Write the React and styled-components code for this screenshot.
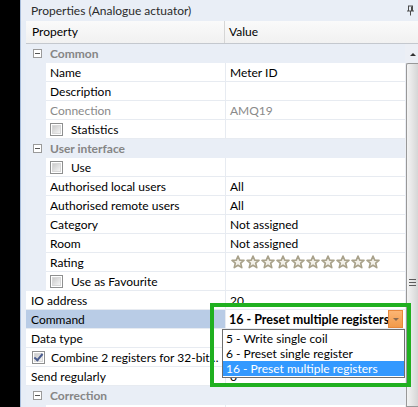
import React from 'react';
import styled, { createGlobalStyle } from 'styled-components';

const GlobalStyle = createGlobalStyle`
  html, body {
    margin: 0;
    padding: 0;
    background: #000;
  }
  body {
    font-family: Lato, "Segoe UI", sans-serif;
    font-size: 12px;
    color: #000;
  }
`;

const rows = [
  { group: 'Common' },
  { label: 'Name', value: 'Meter ID', indent: true },
  { label: 'Description', indent: true },
  { label: 'Connection', value: 'AMQ19', indent: true, muted: true },
  { label: 'Statistics', indent: true, check: 'off' },
  { group: 'User interface' },
  { label: 'Use', indent: true, check: 'off' },
  { label: 'Authorised local users', value: 'All', indent: true },
  { label: 'Authorised remote users', value: 'All', indent: true },
  { label: 'Category', value: 'Not assigned', indent: true },
  { label: 'Room', value: 'Not assigned', indent: true },
  { label: 'Rating', indent: true, stars: 10 },
  { label: 'Use as Favourite', indent: true, check: 'off' },
  { label: 'IO address', value: '20' },
  { label: 'Command', selected: true, combo: '16 - Preset multiple registers' },
  { label: 'Data type' },
  { label: 'Combine 2 registers for 32-bit values', check: 'on' },
  { label: 'Send regularly', value: '0' },
  { group: 'Correction' },
  { label: 'Offset', indent: true },
];

const options = ['5 - Write single coil', '6 - Preset single register', '16 - Preset multiple registers'];

export default function App() {
  return (
    <Screen>
      <GlobalStyle />
      <Gutter />
      <Panel>
        <TitleBar>
          <span>Properties (Analogue actuator)</span>
          <PinIcon />
        </TitleBar>
        <HeaderRow>
          <HeaderName>Property</HeaderName>
          <HeaderValue>Value</HeaderValue>
        </HeaderRow>
        <Body>
          <Grid>
            {rows.map((row, i) =>
              row.group ? (
                <GroupRow key={i}>
                  <Toggle />
                  {row.group}
                </GroupRow>
              ) : (
                <Row key={i}>
                  {row.indent && <Indent />}
                  <NameCell $selected={row.selected} $muted={row.muted} $check={!!row.check} $indent={row.indent}>
                    {row.check && <CheckBox $checked={row.check === 'on'} />}
                    <Label>{row.label}</Label>
                  </NameCell>
                  <ValueCell $muted={row.muted}>
                    {row.value}
                    {row.stars && <Stars count={row.stars} />}
                    {row.combo && (
                      <Combo>
                        <ComboText>{row.combo}</ComboText>
                        <ComboButton />
                      </Combo>
                    )}
                  </ValueCell>
                </Row>
              )
            )}
          </Grid>
          <ScrollBar>
            <ScrollArrow />
            <Thumb>
              <Grip />
            </Thumb>
          </ScrollBar>
        </Body>
      </Panel>
      <DropList>
        {options.map((o, i) => (
          <Option key={o} $active={i === options.length - 1}>
            {o}
          </Option>
        ))}
      </DropList>
      <Highlight />
    </Screen>
  );
}

function PinIcon() {
  return (
    <PinSvg width="9" height="11" viewBox="0 0 9 11">
      <path d="M2 1h5M2.5 1v5M6.5 1v5M1 6h7M4.5 6v4.5" stroke="#4a4a4a" strokeWidth="1" fill="none" />
      <rect x="5" y="1.5" width="1.5" height="4.5" fill="#4a4a4a" />
    </PinSvg>
  );
}

function Stars({ count }) {
  return (
    <StarRow>
      {Array.from({ length: count }).map((_, i) => (
        <svg key={i} width="14" height="14" viewBox="0 0 14 14">
          <path
            d="M7 1 L8.7 5.1 L13 5.4 L9.7 8.2 L10.8 12.6 L7 10.2 L3.2 12.6 L4.3 8.2 L1 5.4 L5.3 5.1 Z"
            fill="#f3f1ea"
            stroke="#a8a18a"
            strokeWidth="1.6"
            strokeLinejoin="round"
          />
        </svg>
      ))}
    </StarRow>
  );
}

const Screen = styled.div`
  position: relative;
  display: flex;
  width: 418px;
  height: 407px;
  overflow: hidden;
  background: #000;
`;

const Gutter = styled.div`
  flex: none;
  width: 20px;
  background: #000;
`;

const Panel = styled.div`
  flex: 1;
  min-width: 0;
  display: flex;
  flex-direction: column;
  background: #e7edf6;
  border-left: 1px solid #a9bedc;
`;

const TitleBar = styled.div`
  height: 21px;
  display: flex;
  align-items: center;
  justify-content: space-between;
  padding: 0 3px 0 10px;
  color: #2b2b2b;
  background: #e9eef6;
`;

const PinSvg = styled.svg`
  display: block;
`;

const HeaderRow = styled.div`
  display: flex;
  height: 22px;
  margin-left: 5px;
  background: linear-gradient(#fafafa, #f1f1f1);
  border-bottom: 1px solid #c4c8ce;
`;

const HeaderName = styled.div`
  width: 199px;
  padding-left: 6px;
  line-height: 22px;
  box-sizing: border-box;
  border-right: 1px solid #d6d6d6;
`;

const HeaderValue = styled.div`
  padding-left: 4px;
  line-height: 22px;
`;

const Body = styled.div`
  flex: 1;
  display: flex;
  margin-left: 5px;
  min-height: 0;
`;

const Grid = styled.div`
  width: 379px;
  flex: none;
  background: #fff;
`;

const GroupRow = styled.div`
  display: flex;
  align-items: center;
  height: 19px;
  background: #e9eef6;
  color: #858585;
  font-weight: 700;
`;

const Toggle = styled.span`
  position: relative;
  width: 9px;
  height: 9px;
  box-sizing: border-box;
  margin: 0 8px 0 7px;
  border: 1px solid #9a9a9a;
  background: #fff;

  &::after {
    content: '';
    position: absolute;
    left: 1px;
    top: 3px;
    width: 5px;
    height: 1px;
    background: #555;
  }
`;

const Row = styled.div`
  display: flex;
  height: 19px;
`;

const Indent = styled.div`
  width: 20px;
  flex: none;
  background: #e9eef6;
`;

const NameCell = styled.div`
  display: flex;
  align-items: center;
  width: ${(p) => (p.$indent ? '179px' : '199px')};
  flex: none;
  box-sizing: border-box;
  padding-left: ${(p) => (p.$indent ? '4px' : p.$check ? '6px' : '5px')};
  border-bottom: 1px solid #e7ebf1;
  background: ${(p) => (p.$selected ? '#b9cce6' : '#fff')};
  color: ${(p) => (p.$muted ? '#8a8a8a' : '#000')};
  min-width: 0;
`;

const Label = styled.span`
  white-space: nowrap;
  overflow: hidden;
  text-overflow: ellipsis;
  padding-right: 4px;
`;

const CheckBox = styled.span`
  position: relative;
  flex: none;
  width: 13px;
  height: 13px;
  box-sizing: border-box;
  margin-right: ${(p) => (p.$checked ? '6px' : '8px')};
  border: 1px solid #8e8f8f;
  background: #fff;

  &::before {
    content: '';
    position: absolute;
    inset: 1px;
    background: linear-gradient(135deg, #cbcbcb, #f4f4f4);
    border: 1px solid #d8d8d8;
    box-sizing: border-box;
  }

  ${(p) =>
    p.$checked &&
    `
    &::after {
      content: '';
      position: absolute;
      left: 3px;
      top: 0px;
      width: 3px;
      height: 7px;
      border: solid #4a5c8e;
      border-width: 0 2px 2px 0;
      transform: rotate(40deg);
    }
  `}
`;

const ValueCell = styled.div`
  position: relative;
  flex: 1;
  min-width: 0;
  display: flex;
  align-items: center;
  padding-left: 4px;
  border-left: 1px solid #e7ebf1;
  border-bottom: 1px solid #e7ebf1;
  color: ${(p) => (p.$muted ? '#8a8a8a' : '#000')};
  white-space: nowrap;
`;

const StarRow = styled.div`
  display: flex;
  gap: 1px;
  margin-left: 1px;
`;

const Combo = styled.div`
  display: flex;
  align-items: center;
  width: 174px;
  height: 18px;
  margin-left: -1px;
`;

const ComboText = styled.span`
  flex: 1;
  min-width: 0;
  overflow: hidden;
  white-space: nowrap;
  font-weight: 700;
  font-size: 12.5px;
`;

const ComboButton = styled.span`
  position: relative;
  flex: none;
  width: 15px;
  height: 18px;
  background: linear-gradient(#fbb574, #f29a4a);
  border: 1px solid #e8883a;
  box-sizing: border-box;

  &::after {
    content: '';
    position: absolute;
    left: 4px;
    top: 7px;
    border: 3px solid transparent;
    border-top: 3px solid #8a6a50;
  }
`;

const ScrollBar = styled.div`
  flex: 1;
  display: flex;
  flex-direction: column;
  background: #eceff5;
`;

const ScrollArrow = styled.div`
  position: relative;
  height: 19px;
  flex: none;

  &::after {
    content: '';
    position: absolute;
    left: 5px;
    top: 6px;
    border: 3px solid transparent;
    border-bottom: 3px solid #333;
  }
`;

const Thumb = styled.div`
  flex: 1;
  display: flex;
  align-items: flex-start;
  justify-content: center;
  padding-top: 215px;
  margin-left: 1px;
  border: 1px solid #989898;
  border-right: none;
  border-radius: 2px 0 0 0;
  background: linear-gradient(90deg, #f4f4f4, #e2e2e2 60%, #d6d6d6);
`;

const Grip = styled.div`
  width: 7px;
  height: 7px;
  background: repeating-linear-gradient(#5c5c5c 0 1px, transparent 1px 3px);
`;

const DropList = styled.div`
  position: absolute;
  left: 222px;
  top: 329px;
  width: 183px;
  box-sizing: border-box;
  padding: 1px 0;
  border: 1px solid #6e6e6e;
  background: #fff;
`;

const Option = styled.div`
  height: 15px;
  line-height: 15px;
  padding-left: 3px;
  background: ${(p) => (p.$active ? '#3399ff' : '#fff')};
  color: ${(p) => (p.$active ? '#fff' : '#000')};
`;

const Highlight = styled.div`
  position: absolute;
  left: 210px;
  top: 303px;
  width: 201px;
  height: 84px;
  box-sizing: border-box;
  border: 4px solid #20b020;
  pointer-events: none;
`;
